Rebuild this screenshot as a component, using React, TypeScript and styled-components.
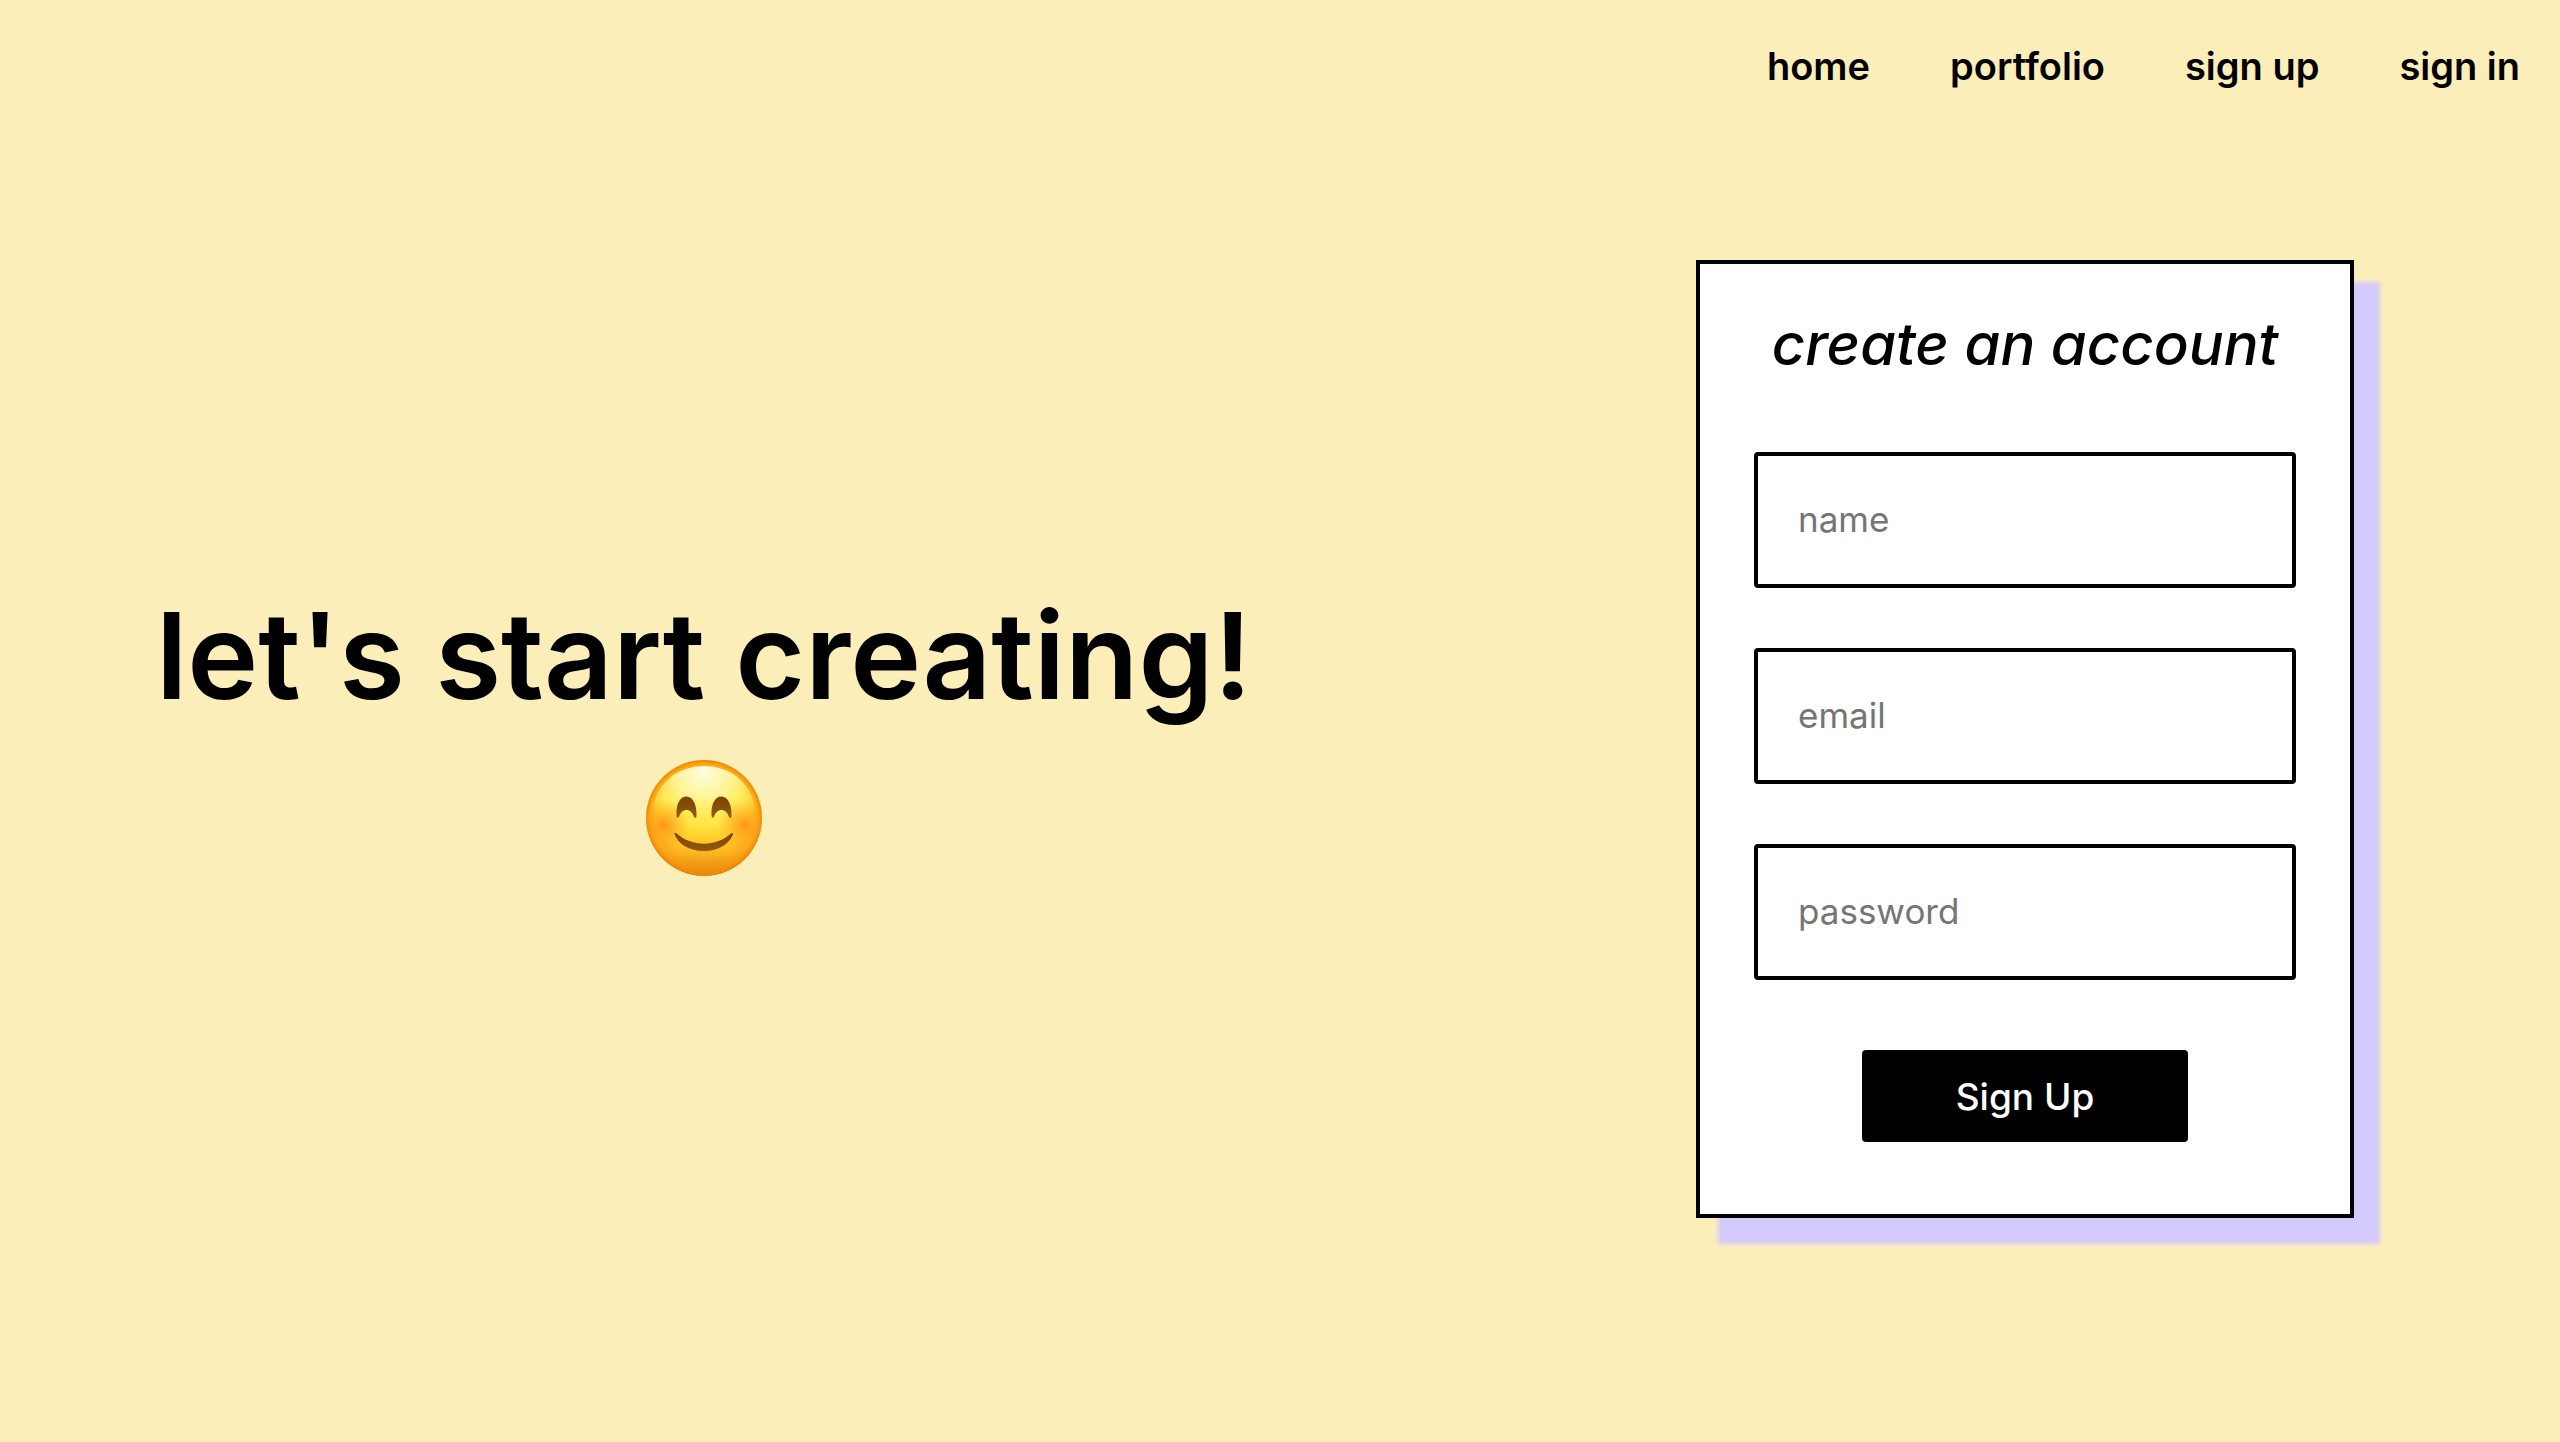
import React from "react";
import styled, { createGlobalStyle } from "styled-components";

const GlobalStyle = createGlobalStyle`
  *, *::before, *::after { box-sizing: border-box; }
  body {
    margin: 0;
    background: #fceeb9;
    color: #000;
    font-family: Inter, "Liberation Sans", sans-serif;
  }
`;

const Page = styled.div`
  min-height: 100vh;
  display: flex;
  flex-direction: column;
`;

const Nav = styled.nav`
  display: flex;
  justify-content: flex-end;
  gap: 80px;
  padding: 40px 40px 0;
`;

const NavLink = styled.a`
  color: inherit;
  font-size: 38px;
  font-weight: 600;
  line-height: 52px;
  text-decoration: none;
`;

const Main = styled.main`
  display: grid;
  grid-template-columns: 55fr 45fr;
  align-items: center;
  padding: 168px 0 80px;
`;

const Hero = styled.h1`
  display: flex;
  flex-direction: column;
  align-items: center;
  gap: 20px;
  margin: 0;
  padding-bottom: 30px;
  font-size: 120px;
  font-weight: 600;
  line-height: 168px;
  white-space: nowrap;
`;

const Smile = styled.svg`
  display: block;
  width: 116px;
  height: 116px;
  overflow: visible;
`;

const CardColumn = styled.div`
  display: flex;
  justify-content: flex-end;
  padding-right: 206px;
`;

const Card = styled.form`
  display: flex;
  flex-direction: column;
  align-items: center;
  width: 658px;
  padding: 40px 54px 72px;
  border: 4px solid #000;
  background: #fff;
  box-shadow: 24px 24px 4px 2px #d3cafb;
`;

const CardTitle = styled.h2`
  margin: 0 0 68px;
  font-size: 58px;
  font-style: italic;
  font-weight: 500;
  line-height: 80px;
  white-space: nowrap;
`;

const Fields = styled.div`
  display: flex;
  flex-direction: column;
  gap: 60px;
  width: 100%;
  margin-bottom: 70px;
`;

const Input = styled.input`
  width: 100%;
  height: 136px;
  margin: 0;
  padding: 0 40px 2px;
  border: 4px solid #000;
  border-radius: 4px;
  background: #fff;
  color: #000;
  font-family: inherit;
  font-size: 35px;
  outline: none;

  &::placeholder {
    color: #757575;
    opacity: 1;
  }
`;

const SubmitButton = styled.button`
  width: 326px;
  height: 92px;
  padding: 0;
  border: 0;
  border-radius: 4px;
  background: #000;
  color: #fff;
  font-family: inherit;
  font-size: 37px;
  font-weight: 500;
  cursor: pointer;
`;

const links = ["home", "portfolio", "sign up", "sign in"];

const fields = [
  { name: "name", type: "text" },
  { name: "email", type: "email" },
  { name: "password", type: "password" },
];

function SmilingFace() {
  return (
    <Smile viewBox="0 0 116 116" role="img" aria-label="smiling face">
      <defs>
        <linearGradient id="skin" x1="0" y1="0" x2="0" y2="1">
          <stop offset="0" stopColor="#ffc91c" />
          <stop offset="0.3" stopColor="#fee02c" />
          <stop offset="0.55" stopColor="#fee033" />
          <stop offset="0.8" stopColor="#fdb522" />
          <stop offset="1" stopColor="#d97f08" />
        </linearGradient>
        <radialGradient id="rim" cx="0.5" cy="0.5" r="0.5">
          <stop offset="0.7" stopColor="#ff9a0c" stopOpacity="0" />
          <stop offset="0.9" stopColor="#fd950c" stopOpacity="0.5" />
          <stop offset="1" stopColor="#e88408" stopOpacity="0.95" />
        </radialGradient>
        <radialGradient id="shine" cx="0.5" cy="0.05" r="0.85">
          <stop offset="0" stopColor="#fffde4" />
          <stop offset="0.35" stopColor="#fff9a4" stopOpacity="0.9" />
          <stop offset="1" stopColor="#ffe832" stopOpacity="0" />
        </radialGradient>
        <radialGradient id="cheek">
          <stop offset="0" stopColor="#ff8412" stopOpacity="0.8" />
          <stop offset="1" stopColor="#ff9a12" stopOpacity="0" />
        </radialGradient>
        <linearGradient id="feature" x1="0" y1="0" x2="0" y2="1">
          <stop offset="0" stopColor="#7a4403" />
          <stop offset="1" stopColor="#955b08" />
        </linearGradient>
        <clipPath id="face">
          <circle cx="58" cy="58" r="58" />
        </clipPath>
      </defs>
      <circle cx="58" cy="58" r="58" fill="url(#skin)" />
      <circle cx="58" cy="58" r="58" fill="url(#rim)" />
      <ellipse cx="58" cy="50" rx="50" ry="44" fill="url(#shine)" />
      <g clipPath="url(#face)">
        <circle cx="18" cy="65" r="26" fill="url(#cheek)" />
        <circle cx="98" cy="65" r="26" fill="url(#cheek)" />
      </g>
      <g fill="url(#feature)">
        <path d="M30.5 55C30 44 34 36.500 40.500 36.500C47 36.500 51 45 50.500 56C50.300 58.500 48.500 58.500 47.800 56.500C46.500 52.500 44 50 40.500 50C37 50 34.500 52.500 33 56.500C32.300 58.500 30.600 58 30.500 55Z" />
        <path d="M65.500 55C65 44 69 36.500 75.500 36.500C82 36.500 86 45 85.500 56C85.300 58.500 83.500 58.500 82.800 56.500C81.500 52.500 79 50 75.500 50C72 50 69.500 52.500 68 56.500C67.300 58.500 65.600 58 65.500 55Z" />
        <path d="M28.500 74C28 72.800 29.500 72.400 30.500 73.500C46 87 70 87 85 73.500C86.200 72.400 87.500 73 87 74.500C83 84 73 91 58 91C43 91 32 84 28.500 74Z" />
      </g>
    </Smile>
  );
}

export default function App() {
  return (
    <>
      <GlobalStyle />
      <Page>
        <Nav>
          {links.map((label) => (
            <NavLink key={label} href={"#" + label.replace(" ", "-")}>
              {label}
            </NavLink>
          ))}
        </Nav>
        <Main>
          <Hero>
            let's start creating!
            <SmilingFace />
          </Hero>
          <CardColumn>
            <Card onSubmit={(event) => event.preventDefault()}>
              <CardTitle>create an account</CardTitle>
              <Fields>
                {fields.map(({ name, type }) => (
                  <Input
                    key={name}
                    name={name}
                    type={type}
                    placeholder={name}
                    aria-label={name}
                  />
                ))}
              </Fields>
              <SubmitButton type="submit">Sign Up</SubmitButton>
            </Card>
          </CardColumn>
        </Main>
      </Page>
    </>
  );
}
